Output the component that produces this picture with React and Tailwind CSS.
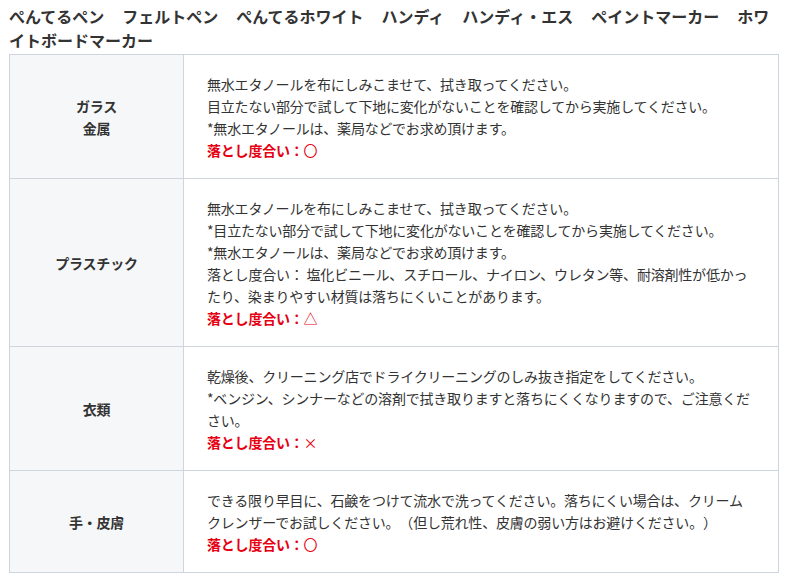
import React from "react";

const products = [
  "ぺんてるペン",
  "フェルトペン",
  "ぺんてるホワイト",
  "ハンディ",
  "ハンディ・エス",
  "ペイントマーカー",
  "ホワイトボードマーカー",
];

const rows = [
  {
    label: ["ガラス", "金属"],
    lines: [
      "無水エタノールを布にしみこませて、拭き取ってください。",
      "目立たない部分で試して下地に変化がないことを確認してから実施してください。",
      "*無水エタノールは、薬局などでお求め頂けます。",
    ],
    grade: "〇",
  },
  {
    label: ["プラスチック"],
    lines: [
      "無水エタノールを布にしみこませて、拭き取ってください。",
      "*目立たない部分で試して下地に変化がないことを確認してから実施してください。",
      "*無水エタノールは、薬局などでお求め頂けます。",
      "落とし度合い： 塩化ビニール、スチロール、ナイロン、ウレタン等、耐溶剤性が低かっ",
      "たり、染まりやすい材質は落ちにくいことがあります。",
    ],
    grade: "△",
  },
  {
    label: ["衣類"],
    lines: [
      "乾燥後、クリーニング店でドライクリーニングのしみ抜き指定をしてください。",
      "*ベンジン、シンナーなどの溶剤で拭き取りますと落ちにくくなりますので、ご注意くだ",
      "さい。",
    ],
    grade: "×",
  },
  {
    label: ["手・皮膚"],
    lines: [
      "できる限り早目に、石鹸をつけて流水で洗ってください。落ちにくい場合は、クリーム",
      "クレンザーでお試しください。（但し荒れ性、皮膚の弱い方はお避けください。）",
    ],
    grade: "〇",
  },
];

export default function App() {
  return (
    <div
      className="min-h-screen bg-white px-[9px] pt-[4px] text-[#333]"
      style={{ fontFamily: '"Noto Sans CJK JP", "Noto Sans", sans-serif' }}
    >
      {/* product names */}
      <div className="text-[16px] leading-[24px] font-bold">
        {products.map((p) => (
          <span key={p} className="mr-[18px]">
            {p}
          </span>
        ))}
      </div>

      <table className="mt-[2px] w-[770px] border-collapse text-[14px] leading-[22px] tracking-[-0.2px] [text-spacing-trim:space-all]">
        <tbody>
          {rows.map((r, i) => (
            <tr key={i}>
              <th className="w-[174px] border border-[#cfd5df] bg-[#f6f7f9] text-center font-bold">
                {r.label.map((l) => (
                  <div key={l}>{l}</div>
                ))}
              </th>
              <td className="border border-[#cfd5df] px-[23px] py-[17.5px] align-middle">
                {r.lines.map((l, j) => (
                  <div key={j} className="whitespace-nowrap">
                    {l}
                  </div>
                ))}
                <div className="font-bold text-[#e60012]">
                  落とし度合い：<span className="font-normal">{r.grade}</span>
                </div>
              </td>
            </tr>
          ))}
        </tbody>
      </table>
    </div>
  );
}
